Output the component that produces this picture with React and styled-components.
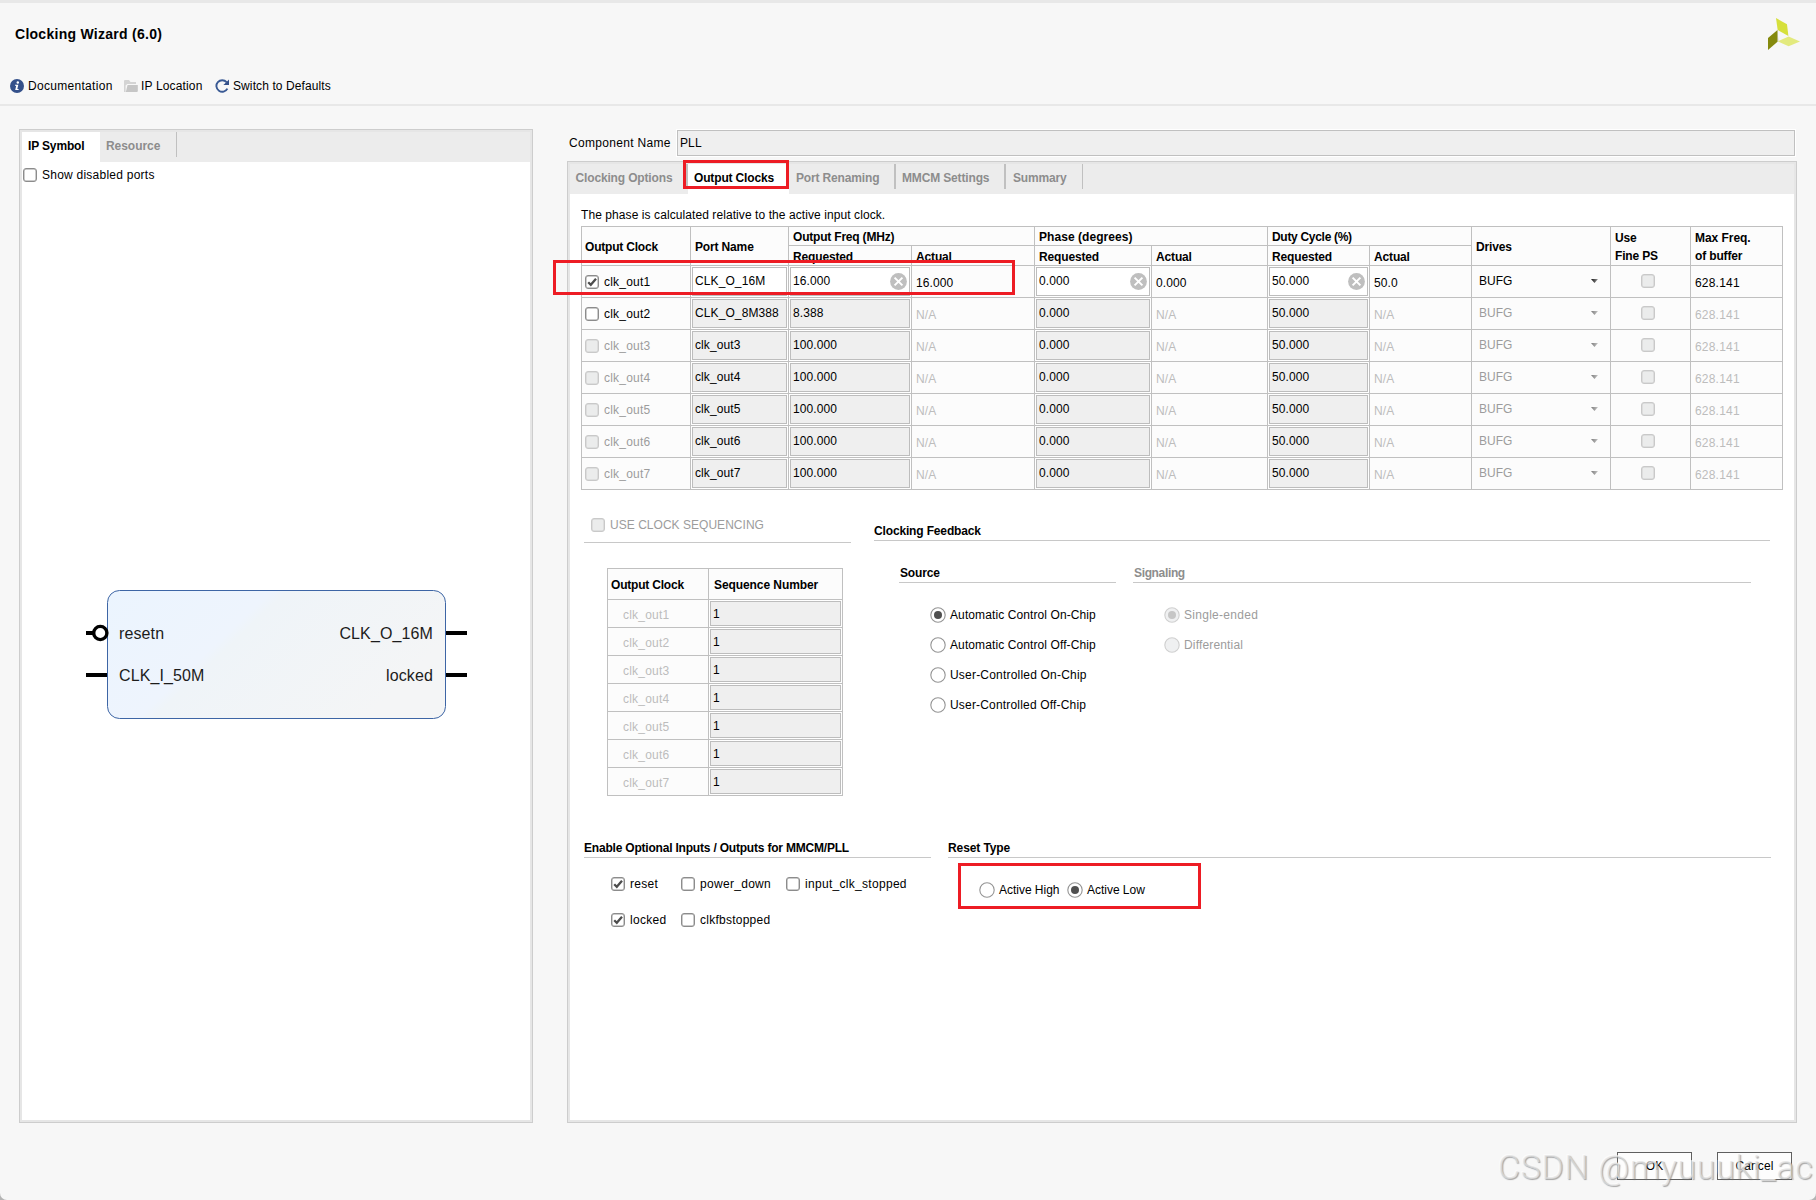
import React from "react";
import styled, { createGlobalStyle } from "styled-components";

const Global = createGlobalStyle`
  html, body { margin: 0; padding: 0; background: #b4b4b4; }
  * { box-sizing: border-box; }
`;

const Window = styled.div`
  position: relative;
  display: flex;
  flex-direction: column;
  width: 1816px;
  height: 1200px;
  overflow: hidden;
  background: #f7f7f7;
  border-top: 3px solid #e8e8e8;
  border-radius: 0 0 7px 7px;
  font-family: "Liberation Sans", Arial, sans-serif;
  font-size: 12px;
  line-height: 14px;
  color: #000;
`;

const Label = styled.span`
  display: block;
  flex: none;
  white-space: nowrap;
  letter-spacing: ${(p) => (p.$ls !== undefined ? p.$ls : p.$bold ? -0.15 : 0.1)}px;
  font-weight: ${(p) => (p.$bold ? 700 : 400)};
  color: ${(p) => p.$color || "inherit"};
`;

/* ---------- header ---------- */

const Header = styled.header`
  display: flex;
  justify-content: space-between;
  height: 103px;
  flex: none;
  padding: 0 14px 0 10px;
  border-bottom: 2px solid #e8e8e8;
`;

const HeaderLeft = styled.div`
  display: flex;
  flex-direction: column;
  padding-top: 23px;
`;

const Title = styled.h1`
  margin: 0 0 0 5px;
  font-size: 14px;
  line-height: 16px;
  font-weight: 700;
  letter-spacing: 0.27px;
`;

const Toolbar = styled.div`
  display: flex;
  padding-top: 34px;
`;

const Tool = styled.div`
  display: flex;
  width: ${(p) => p.$w}px;
  gap: ${(p) => p.$gap}px;
  padding-top: 3px;
`;

const LogoSvg = styled.svg`
  display: block;
  margin-top: 14px;
`;

/* ---------- panels ---------- */

const Body = styled.main`
  display: flex;
  gap: 34px;
  height: 1017px;
  flex: none;
  padding: 23px 19px 0 19px;
`;

const Panel = styled.section`
  display: flex;
  flex-direction: column;
  width: ${(p) => p.$w}px;
  height: ${(p) => p.$h}px;
  flex: none;
  border: 1px solid #cdcdcd;
  background: #fff;
  box-shadow: inset 0 0 0 2px #e6e6e6;
  padding: 2px;
`;

const RightColumn = styled.div`
  display: flex;
  flex-direction: column;
  width: 1230px;
`;

const TabBar = styled.div`
  display: flex;
  height: 30px;
  flex: none;
  background: #ececec;
`;

const Tab = styled.div`
  width: ${(p) => p.$w}px;
  height: ${(p) => (p.$active ? 30 : 25)}px;
  padding: 7px 0 0 ${(p) => p.$pl ?? 6}px;
  background: ${(p) => (p.$active ? "#fff" : "transparent")};
  color: ${(p) => (p.$active ? "#000" : "#8d8d8d")};
  border-right: ${(p) => p.$sep || 0}px solid #c0c0c0;
`;

const NameRow = styled.div`
  display: flex;
  height: 32px;
  padding: 0 0 4px 2px;
`;

const NameLabel = styled.div`
  width: 107px;
  padding-top: 7px;
`;

const NameField = styled.div`
  width: 1120px;
  height: 28px;
  border: 1px solid #fff;
  background: #efefef;
  box-shadow: inset 0 0 0 1px #c0c0c0;
  padding: 6px 0 0 3px;
`;

/* ---------- controls ---------- */

const Check = styled.span`
  display: block;
  flex: none;
  width: 14px;
  height: 14px;
  border: 1px solid ${(p) => (p.$disabled ? "#c9c9c9" : "#8c8c8c")};
  border-radius: 3px;
  background: ${(p) => (p.$disabled ? "#ebecec" : "#fff")};
  box-shadow: inset 0 0 0 0.5px ${(p) => (p.$disabled ? "#cfcfcf" : "#9a9a9a")};
  svg { display: block; }
`;

function Checkbox({ checked, disabled }) {
  return (
    <Check $disabled={disabled}>
      {checked && (
        <svg width="12" height="12" viewBox="0 0 12 12">
          <path d="M2.2 6.2 L4.8 8.8 L10 2.8" fill="none" stroke="#4d4d4d" strokeWidth="2.3" />
        </svg>
      )}
    </Check>
  );
}

function Radio({ checked, disabled }) {
  return (
    <svg width="16" height="16" viewBox="0 0 16 16">
      <circle cx="8" cy="8" r="7.2" fill={disabled ? "#eff0f1" : "#fff"} stroke={disabled ? "#cfcfcf" : "#949494"} strokeWidth="1.1" />
      {checked && <circle cx="8" cy="8" r="4" fill={disabled ? "#c6c6c6" : "#505050"} />}
    </svg>
  );
}

const Option = styled.div`
  display: flex;
  width: ${(p) => (p.$w ? p.$w + "px" : "auto")};
  gap: 5px;
  color: ${(p) => (p.$disabled ? "#9c9c9c" : "#000")};
  svg { display: block; flex: none; }
`;

const RadioOption = styled(Option)`
  height: ${(p) => p.$h || 30}px;
  gap: 4px;
  ${Label} { padding-top: 1px; }
`;

/* ---------- tables ---------- */

const ClockTable = styled.div`
  display: grid;
  width: 1202px;
  grid-template-columns: 108px 97px 122px 122px 116px 115px 101px 101px 138px 79px 91px;
  grid-template-rows: 18px 19px repeat(7, 31px);
  gap: 1px;
  padding: 1px;
  background: #c0c0c0;
`;

const Cell = styled.div`
  display: flex;
  align-items: flex-start;
  min-width: 0;
  overflow: hidden;
  background: #fcfcfc;
  padding: ${(p) => p.$pt ?? 0}px 0 0 ${(p) => p.$pl ?? 4}px;
  gap: 5px;
  grid-column: ${(p) => (p.$cs ? `span ${p.$cs}` : "auto")};
  grid-row: ${(p) => (p.$rs ? `span ${p.$rs}` : "auto")};
  color: ${(p) => p.$color || "#000"};
`;

const StackCell = styled(Cell)`
  flex-direction: column;
  gap: 4px;
`;

const FieldCell = styled.div`
  display: flex;
  background: #fff;
  padding: 1px;
`;

const Field = styled.div`
  display: flex;
  justify-content: space-between;
  flex: 1;
  min-width: 0;
  border: 1px solid #bdbdbd;
  background: ${(p) => (p.$active ? "#fff" : "#efefef")};
  padding: ${(p) => p.$pt}px 2px 0 ${(p) => p.$pl ?? 2}px;
`;

const ClearSvg = styled.svg`
  display: block;
  flex: none;
  margin-top: -1px;
`;

const ArrowSvg = styled.svg`
  display: block;
  margin: 5px 12px 0 auto;
  opacity: ${(p) => (p.$disabled ? 0.55 : 1)};
`;

const SequenceTable = styled.div`
  display: grid;
  width: 236px;
  margin: 25px 0 0 23px;
  grid-template-columns: 100px 133px;
  grid-template-rows: 30px repeat(7, 27px);
  gap: 1px;
  padding: 1px;
  background: #c0c0c0;
`;

/* ---------- content areas ---------- */

const Content = styled.div`
  display: flex;
  flex-direction: column;
  padding: 14px 0 0 11px;
`;

const Note = styled.div`
  height: 18px;
`;

const Columns = styled.div`
  display: flex;
  align-items: flex-start;
  padding-left: 3px;
  height: ${(p) => p.$h}px;
`;

const Group = styled.div`
  display: flex;
  flex-direction: column;
  width: ${(p) => p.$w}px;
  margin: ${(p) => p.$mt || 0}px 0 0 ${(p) => p.$ml || 0}px;
`;

const GroupTitle = styled.div`
  display: flex;
  gap: 5px;
  height: ${(p) => p.$h || 17}px;
  padding-left: ${(p) => p.$pl || 0}px;
  border-bottom: 1px solid #c8c8c8;
`;

const SubGroups = styled.div`
  display: flex;
  gap: 17px;
  padding: 25px 0 0 25px;
`;

const RadioList = styled.div`
  display: flex;
  flex-direction: column;
  padding: 24px 0 0 31px;
`;

const OptionRow = styled.div`
  display: flex;
  padding: ${(p) => p.$pt}px 0 0 ${(p) => p.$pl}px;
`;

/* ---------- IP symbol ---------- */

const SymbolArea = styled.div`
  display: flex;
  flex-direction: column;
  padding: 6px 0 0 1px;
`;

const Diagram = styled.svg`
  display: block;
  margin: 398px 0 0 57px;
  font-family: "Liberation Sans", Arial, sans-serif;
  font-size: 16px;
  letter-spacing: 0.12px;
  text { fill: #1c1c1c; }
`;

/* ---------- footer and overlays ---------- */

const Footer = styled.footer`
  display: flex;
  justify-content: flex-end;
  gap: 25px;
  padding: 29px 24px 0 0;
`;

const Button = styled.div`
  display: flex;
  justify-content: center;
  width: 75px;
  height: 28px;
  padding-top: 6px;
  border: 1px solid #606060;
  background: #fdfdfd;
`;

const Highlight = styled.div`
  position: absolute;
  left: ${(p) => p.$x}px;
  top: ${(p) => p.$y - 3}px;
  width: ${(p) => p.$w}px;
  height: ${(p) => p.$h}px;
  border: 3px solid #ed1c24;
`;

const Watermark = styled.div`
  position: absolute;
  left: 1498px;
  top: 1144px;
  font-family: Roboto, "Liberation Sans", sans-serif;
  font-weight: 300;
  font-size: 34px;
  line-height: 40px;
  letter-spacing: 0.65px;
  white-space: nowrap;
  color: rgba(226, 226, 226, 0.7);
  text-shadow: 1px 1px 1px rgba(110, 110, 110, 0.6), -1px -1px 0 rgba(255, 255, 255, 0.6);
`;

function Logo() {
  return (
    <LogoSvg width="34" height="38" viewBox="0 0 34 38">
      <polygon points="9.6,13 10.4,24.4 9.6,25" fill="#c4c4b4" />
      <polygon points="8,1 19,7.2 20.4,19 9.7,13" fill="#d6e03c" />
      <polygon points="0,21 9.5,13 9.5,24.8 0,33" fill="#858a0e" />
      <polygon points="9.8,24.3 20.6,19.4 32,24.4 20.6,29.3" fill="#e3ea7e" />
    </LogoSvg>
  );
}

const InfoIcon = () => (
  <svg width="14" height="14" viewBox="0 0 14 14">
    <circle cx="7" cy="7" r="7" fill="#34508a" />
    <circle cx="7.8" cy="3.5" r="1.2" fill="#fff" />
    <path d="M5 5.8h3.3L7.3 10h1.3v.9H5.2l1-4.1H5z" fill="#fff" />
  </svg>
);

const FolderIcon = () => (
  <svg width="14" height="14" viewBox="0 0 14 14">
    <path d="M0 13V2q0-1 1-1h4l1.5 2H12v2H3.2L1.6 6.5V13z" fill="#d4d4d4" />
    <path d="M3.6 6H13.8v6q0 1-1 1H1.8z" fill="#c6c6c6" />
  </svg>
);

const RefreshIcon = () => (
  <svg width="15" height="14" viewBox="0 0 15 14">
    <path d="M11.6 3.2A5.8 5.8 0 1 0 12.4 9.6" fill="none" stroke="#3a5a94" strokeWidth="1.9" />
    <path d="M14 .6V6H8.4z" fill="#34508a" />
  </svg>
);

const ClearIcon = () => (
  <ClearSvg width="17" height="17" viewBox="0 0 17 17">
    <circle cx="8.5" cy="8.5" r="8.4" fill="#bfbfbf" />
    <path d="M4.6 4.6L12.4 12.4M12.4 4.6L4.6 12.4" stroke="#fff" strokeWidth="2" />
  </ClearSvg>
);

const Arrow = ({ disabled }) => (
  <ArrowSvg $disabled={disabled} width="7" height="4" viewBox="0 0 7 4">
    <defs>
      <linearGradient id="arrowFill" x1="0" x2="1" y1="0" y2="0">
        <stop offset="0" stopColor="#111" />
        <stop offset="1" stopColor="#999" />
      </linearGradient>
    </defs>
    <path d="M0 0H7L3.5 4z" fill="url(#arrowFill)" />
  </ArrowSvg>
);

const clocks = [
  { id: "clk_out1", port: "CLK_O_16M", freq: "16.000", actual: "16.000", phase: "0.000", duty: "50.0", on: true },
  { id: "clk_out2", port: "CLK_O_8M388", freq: "8.388", available: true },
  { id: "clk_out3", port: "clk_out3", freq: "100.000" },
  { id: "clk_out4", port: "clk_out4", freq: "100.000" },
  { id: "clk_out5", port: "clk_out5", freq: "100.000" },
  { id: "clk_out6", port: "clk_out6", freq: "100.000" },
  { id: "clk_out7", port: "clk_out7", freq: "100.000" },
];

function Entry({ value, active, clearable }) {
  return (
    <FieldCell>
      <Field $active={active} $pt={6}>
        <Label>{value}</Label>
        {clearable && <ClearIcon />}
      </Field>
    </FieldCell>
  );
}

function ClockRow({ clock }) {
  const { id, port, freq, on, available } = clock;
  const faint = on ? "#000" : "#bdbdbd";
  return (
    <>
      <Cell $pt={9} $pl={3} $color={on || available ? "#000" : "#9c9c9c"}>
        <Checkbox checked={on} disabled={!on && !available} />
        <Label $ls={0.2}>{id}</Label>
      </Cell>
      <Entry value={port} active={on} />
      <Entry value={freq} active={on} clearable={on} />
      <Cell $pt={10} $color={faint}><Label>{clock.actual || "N/A"}</Label></Cell>
      <Entry value="0.000" active={on} clearable={on} />
      <Cell $pt={10} $color={faint}><Label>{clock.phase || "N/A"}</Label></Cell>
      <Entry value="50.000" active={on} clearable={on} />
      <Cell $pt={10} $color={faint}><Label>{clock.duty || "N/A"}</Label></Cell>
      <Cell $pt={8} $pl={7} $color={on ? "#000" : "#9c9c9c"}>
        <Label $ls={0}>BUFG</Label>
        <Arrow disabled={!on} />
      </Cell>
      <Cell $pt={8} $pl={30}><Checkbox disabled /></Cell>
      <Cell $pt={10} $color={faint}><Label $ls={0.2}>628.141</Label></Cell>
    </>
  );
}

function Head({ children, $ls, ...rest }) {
  return <Cell {...rest}><Label $bold $ls={$ls}>{children}</Label></Cell>;
}

export default function App() {
  return (
    <Window>
      <Global />
      <Header>
        <HeaderLeft>
          <Title>Clocking Wizard (6.0)</Title>
          <Toolbar>
            <Tool $w={114} $gap={4}><InfoIcon /><Label $ls={0.3}>Documentation</Label></Tool>
            <Tool $w={91} $gap={3}><FolderIcon /><Label $ls={0.15}>IP Location</Label></Tool>
            <Tool $w={120} $gap={3}><RefreshIcon /><Label>Switch to Defaults</Label></Tool>
          </Toolbar>
        </HeaderLeft>
        <Logo />
      </Header>

      <Body>
        <Panel $w={514} $h={994}>
          <TabBar>
            <Tab $w={78} $active><Label $bold>IP Symbol</Label></Tab>
            <Tab $w={77} $sep={1}><Label $bold $ls={-0.05}>Resource</Label></Tab>
          </TabBar>
          <SymbolArea>
            <Option><Checkbox /><Label $ls={0.24}>Show disabled ports</Label></Option>
            <Diagram width="390" height="150" viewBox="80 580 390 150">
              <defs>
                <linearGradient id="chip" x1="0" y1="0" x2="1" y2="0.4">
                  <stop offset="0" stopColor="#ebf4fe" />
                  <stop offset="0.42" stopColor="#eef4fd" />
                  <stop offset="0.46" stopColor="#eff4f8" />
                  <stop offset="1" stopColor="#f4f5f6" />
                </linearGradient>
              </defs>
              <rect x="107.5" y="590.5" width="338" height="128" rx="12" fill="url(#chip)" stroke="#3d65a5" />
              <path d="M86 633H94M86 675H107M446 633H467M446 675H467" stroke="#000" strokeWidth="4" />
              <circle cx="100.3" cy="633" r="6.6" fill="#fff" stroke="#000" strokeWidth="3.4" />
              <text x="119" y="639">resetn</text>
              <text x="119" y="681">CLK_I_50M</text>
              <text x="433" y="639" textAnchor="end">CLK_O_16M</text>
              <text x="433" y="681" textAnchor="end">locked</text>
            </Diagram>
          </SymbolArea>
        </Panel>

        <RightColumn>
          <NameRow>
            <NameLabel><Label $ls={0.32}>Component Name</Label></NameLabel>
            <NameField><Label>PLL</Label></NameField>
          </NameRow>
          <Panel $w={1230} $h={962}>
            <TabBar>
              <Tab $w={118} $sep={2} $pl={5.5}><Label $bold>Clocking Options</Label></Tab>
              <Tab $w={101} $active><Label $bold>Output Clocks</Label></Tab>
              <Tab $w={107} $sep={2} $pl={7}><Label $bold>Port Renaming</Label></Tab>
              <Tab $w={110} $sep={2}><Label $bold>MMCM Settings</Label></Tab>
              <Tab $w={77} $sep={1} $pl={7}><Label $bold>Summary</Label></Tab>
            </TabBar>
            <Content>
              <Note><Label $ls={0.08}>The phase is calculated relative to the active input clock.</Label></Note>
              <ClockTable>
                <Head $rs={2} $pt={13} $pl={3} $ls={-0.2}>Output Clock</Head>
                <Head $rs={2} $pt={13}>Port Name</Head>
                <Head $cs={2} $pt={3} $ls={-0.2}>Output Freq (MHz)</Head>
                <Head $cs={2} $pt={3} $ls={0.05}>Phase (degrees)</Head>
                <Head $cs={2} $pt={3} $ls={-0.3}>Duty Cycle (%)</Head>
                <Head $rs={2} $pt={13}>Drives</Head>
                <StackCell $rs={2} $pt={4}><Label $bold>Use</Label><Label $bold>Fine PS</Label></StackCell>
                <StackCell $rs={2} $pt={4}><Label $bold $ls={-0.05}>Max Freq.</Label><Label $bold>of buffer</Label></StackCell>
                {["freq", "phase", "duty"].map((k) => (
                  <React.Fragment key={k}>
                    <Head $pt={4}>Requested</Head>
                    <Head $pt={4}>Actual</Head>
                  </React.Fragment>
                ))}
                {clocks.map((c) => <ClockRow key={c.id} clock={c} />)}
              </ClockTable>

              <Columns $h={351}>
                <Group $w={267} $mt={28}>
                  <GroupTitle $h={25} $pl={7}>
                    <Checkbox disabled />
                    <Label $color="#9c9c9c" $ls={0.03}>USE CLOCK SEQUENCING</Label>
                  </GroupTitle>
                  <SequenceTable>
                    <Head $pt={9} $pl={3} $ls={-0.2}>Output Clock</Head>
                    <Head $pt={9} $pl={5} $ls={-0.08}>Sequence Number</Head>
                    {clocks.map((c) => (
                      <React.Fragment key={c.id}>
                        <Cell $pt={8} $pl={15} $color="#bdbdbd"><Label $ls={0.2}>{c.id}</Label></Cell>
                        <FieldCell><Field $pt={5}><Label>1</Label></Field></FieldCell>
                      </React.Fragment>
                    ))}
                  </SequenceTable>
                </Group>
                <Group $w={896} $ml={23} $mt={34}>
                  <GroupTitle><Label $bold>Clocking Feedback</Label></GroupTitle>
                  <SubGroups>
                    <Group $w={217}>
                      <GroupTitle $pl={1}><Label $bold>Source</Label></GroupTitle>
                      <RadioList>
                        <RadioOption><Radio checked /><Label>Automatic Control On-Chip</Label></RadioOption>
                        <RadioOption><Radio /><Label>Automatic Control Off-Chip</Label></RadioOption>
                        <RadioOption><Radio /><Label $ls={0.2}>User-Controlled On-Chip</Label></RadioOption>
                        <RadioOption><Radio /><Label $ls={0.18}>User-Controlled Off-Chip</Label></RadioOption>
                      </RadioList>
                    </Group>
                    <Group $w={618}>
                      <GroupTitle $pl={1}><Label $bold $color="#8d8d8d" $ls={-0.35}>Signaling</Label></GroupTitle>
                      <RadioList>
                        <RadioOption $disabled><Radio checked disabled /><Label $ls={0.28}>Single-ended</Label></RadioOption>
                        <RadioOption $disabled><Radio disabled /><Label $ls={0.16}>Differential</Label></RadioOption>
                      </RadioList>
                    </Group>
                  </SubGroups>
                </Group>
              </Columns>

              <Columns $h={100}>
                <Group $w={347}>
                  <GroupTitle><Label $bold $ls={-0.2}>Enable Optional Inputs / Outputs for MMCM/PLL</Label></GroupTitle>
                  <OptionRow $pt={19} $pl={27}>
                    <Option $w={70}><Checkbox checked /><Label $ls={0.3}>reset</Label></Option>
                    <Option $w={105}><Checkbox /><Label $ls={0.3}>power_down</Label></Option>
                    <Option><Checkbox /><Label $ls={0.3}>input_clk_stopped</Label></Option>
                  </OptionRow>
                  <OptionRow $pt={22} $pl={27}>
                    <Option $w={70}><Checkbox checked /><Label $ls={0.3}>locked</Label></Option>
                    <Option><Checkbox /><Label $ls={0.25}>clkfbstopped</Label></Option>
                  </OptionRow>
                </Group>
                <Group $w={823} $ml={17}>
                  <GroupTitle><Label $bold $ls={-0.1}>Reset Type</Label></GroupTitle>
                  <OptionRow $pt={24} $pl={31}>
                    <RadioOption $w={88} $h={16}><Radio /><Label $ls={-0.02}>Active High</Label></RadioOption>
                    <RadioOption $h={16}><Radio checked /><Label $ls={-0.02}>Active Low</Label></RadioOption>
                  </OptionRow>
                </Group>
              </Columns>
            </Content>
          </Panel>
        </RightColumn>
      </Body>

      <Footer>
        <Button><Label>OK</Label></Button>
        <Button><Label>Cancel</Label></Button>
      </Footer>

      <Highlight $x={683} $y={160} $w={106} $h={29} />
      <Highlight $x={553} $y={260} $w={462} $h={35} />
      <Highlight $x={958} $y={863} $w={243} $h={46} />
      <Watermark>CSDN @myuuuki_ac</Watermark>
    </Window>
  );
}
